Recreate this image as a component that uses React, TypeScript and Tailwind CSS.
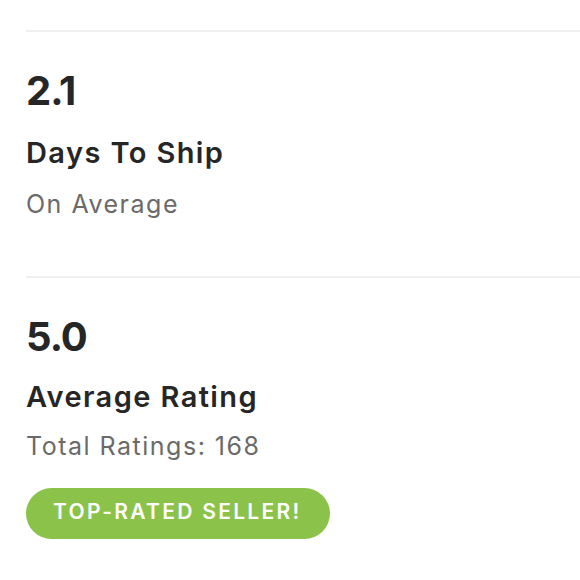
import React from "react";

function Stat({ value, title, sub, children, gapTitle, gapSub }: { value: string; title: string; sub: string; children?: React.ReactNode; gapTitle: string; gapSub: string }) {
  return (
    <div className="flex flex-col items-start">
      <div className="h-[2px] w-full bg-[#f0efed]" />
      <div className="mt-[39px] text-[40px] leading-none font-bold tracking-[-1px] text-[#262626]">{value}</div>
      <div className={`${gapTitle} text-[29px] leading-none font-semibold tracking-[1.4px] text-[#262626]`}>{title}</div>
      <div className={`${gapSub} text-[25px] leading-none tracking-[1.5px] text-[#6a6a6a]`}>{sub}</div>
      {children}
    </div>
  );
}

export default function App() {
  return (
    <div
      className="w-[580px] h-[580px] bg-white overflow-hidden pl-[26px] pt-[30px]"
      style={{ fontFamily: "Inter, 'Open Sans', sans-serif" }}
    >
      <Stat value="2.1" title="Days To Ship" sub="On Average" gapTitle="mt-[27px]" gapSub="mt-[25px]" />
      <div className="mt-[59px]">
        <Stat value="5.0" title="Average Rating" sub="Total Ratings: 168" gapTitle="mt-[25px]" gapSub="mt-[23px]">
          <div className="mt-[29px] h-[51px] w-[304px] rounded-full bg-[#8bc34a] flex items-center pl-[27px] pb-[5px] text-white text-[21px] leading-none font-semibold tracking-[2.3px]">
            TOP-RATED SELLER!
          </div>
        </Stat>
      </div>
    </div>
  );
}
